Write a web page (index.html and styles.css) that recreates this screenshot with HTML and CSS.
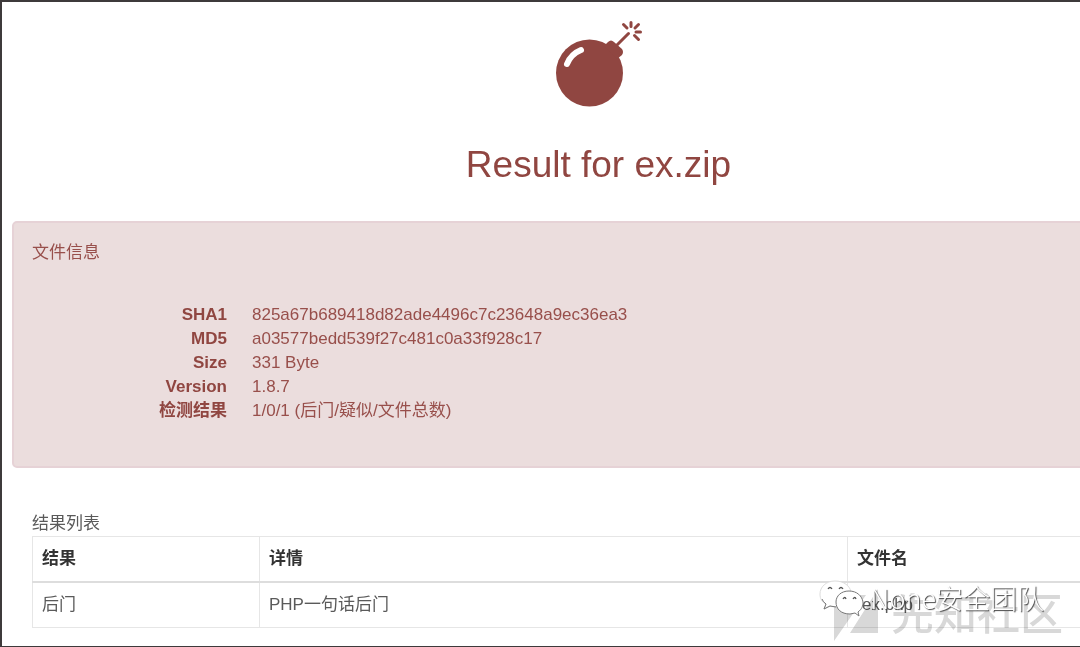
FILE: index.html
```html
<!DOCTYPE html>
<html lang="zh-CN">
<head>
<meta charset="utf-8">
<title>Result for ex.zip</title>
<link rel="stylesheet" href="styles.css">
</head>
<body>
<main class="page">
  <div class="content">
    <header class="hero">
      <svg class="bomb" viewBox="0 0 96 96" aria-hidden="true">
        <circle cx="38.500" cy="57" r="33.500" fill="currentColor"/>
        <path d="M53 30 L57 26 Q60 23 63 26 L71 33 Q73 36 71 39 L66 43 Z" fill="currentColor"/>
        <path d="M66 29 L77.500 17.500" fill="none" stroke="currentColor" stroke-width="3" stroke-linecap="round"/>
        <path d="M76 12 L72.500 8.500 M80 10.500 V6.500 M84 12 L87.500 8.500 M85 16 H89.500 M83.500 19.500 L87.500 23.500" fill="none" stroke="currentColor" stroke-width="3" stroke-linecap="round"/>
        <path d="M16 48 Q20 38 30 34" fill="none" stroke="#fff" stroke-width="6" stroke-linecap="round"/>
      </svg>
      <h1 class="title">Result for ex.zip</h1>
    </header>
    <section class="alert">
      <h2 class="label">文件信息</h2>
      <dl class="info">
        <dt>SHA1</dt><dd>825a67b689418d82ade4496c7c23648a9ec36ea3</dd>
        <dt>MD5</dt><dd>a03577bedd539f27c481c0a33f928c17</dd>
        <dt>Size</dt><dd>331 Byte</dd>
        <dt>Version</dt><dd>1.8.7</dd>
        <dt>检测结果</dt><dd>1/0/1 (后门/疑似/文件总数)</dd>
      </dl>
    </section>
    <section class="results">
      <h2 class="label">结果列表</h2>
      <table class="table">
        <colgroup><col class="col-result"><col class="col-detail"><col></colgroup>
        <thead><tr><th>结果</th><th>详情</th><th>文件名</th></tr></thead>
        <tbody><tr><td>后门</td><td>PHP一句话后门</td><td class="file">ex.php</td></tr></tbody>
      </table>
    </section>
  </div>
  <div class="community">
    <svg class="community-logo" viewBox="0 0 46 54" aria-hidden="true">
      <path d="M1 7 H33 L1 53 Z M45 1 V45 H17 Z" fill="currentColor"/>
      <path d="M44 -2 L12 43" stroke="#fff" stroke-width="3"/>
    </svg>
    <span>先知社区</span>
  </div>
  <div class="account">
    <svg class="wechat" viewBox="0 0 46 38" aria-hidden="true">
      <path d="M16 2 C7 2 1 8 1 15 C1 20 3 23 7 25 L5 30 L11 27 C13 28 17 28 20 27 C30 26 33 20 32 13 C31 7 25 2 16 2 Z" fill="#fff" stroke="#ddd"/>
      <path d="M3 20 Q4 23 7 25 L5 30 L11 27 L17 28" fill="none" stroke="#777"/>
      <path d="M30 12 C22 12 17 17 17 23 C17 30 22 35 31 35 L36 34 L40 37 L39 33 C43 30 44 27 44 23 C43 17 38 12 30 12 Z" fill="#fff" stroke="#777"/>
      <path d="M9 10 q2-3 4 0 M20 10 q2-3 4 0 M24 20 q2-3 3 0 M34 20 q2-3 3 0" fill="none" stroke="#555" stroke-width="1.3"/>
    </svg>
    <span>None安全团队</span>
  </div>
</main>
</body>
</html>
```
FILE: styles.css
```css
* { box-sizing: border-box; }

body {
  margin: 0;
  background: #fff;
  color: #5a5a5a;
  font-family: "Liberation Sans", "Noto Sans CJK SC", sans-serif;
  font-size: 17px;
  line-height: 24px;
}

h1, h2, dl, dd { margin: 0; }

.page {
  position: relative;
  min-height: 100vh;
  overflow: hidden;
  padding: 14px 0 16px 10px;
  border: solid #3e3a3b;
  border-width: 2px 0 1px 2px;
}

/* The report is wider than the window and runs past its right edge. */
.content { margin-right: -105px; }

.hero {
  display: flex;
  flex-direction: column;
  align-items: center;
  gap: 31px;
  color: #904641;
}

.bomb {
  display: block;
  width: 96px;
  height: 96px;
}

.title {
  font-size: 37px;
  line-height: 44px;
  font-weight: 400;
}

.label {
  font-size: 17px;
  line-height: 24px;
  font-weight: 400;
}

.alert {
  margin-top: 34px;
  padding: 18px 18px 43px;
  border: 2px solid #e6d2d6;
  border-radius: 5px;
  background: #ebdddd;
  color: #984f4b;
}

.info {
  display: grid;
  grid-template-columns: 195px 1fr;
  column-gap: 25px;
  margin-top: 38px;
}

.info dt {
  color: #904641;
  font-weight: 700;
  text-align: right;
}

.results { padding: 44px 20px 0; }

.table {
  width: 100%;
  border-collapse: collapse;
  table-layout: fixed;
}

.col-result { width: 227px; }
.col-detail { width: 588px; }

.table th,
.table td {
  padding: 10px 9px;
  border: 1px solid #e6e6e6;
  text-align: left;
}

.table th {
  border-bottom: 2px solid #ddd;
  color: #333;
}

.table .file { padding-left: 14px; }

/* Watermarks over the lower right corner of the report. */
.community,
.account {
  position: absolute;
  display: flex;
  align-items: center;
  pointer-events: none;
}

.community {
  right: 17px;
  bottom: 4px;
  gap: 12px;
  color: #d8d8d8;
  mix-blend-mode: multiply;
  font-size: 43px;
  line-height: 54px;
  font-weight: 500;
}

.community-logo {
  width: 46px;
  height: 54px;
}

.account {
  right: 36px;
  bottom: 28px;
  gap: 5px;
  color: #fff;
  font-size: 27px;
  line-height: 40px;
  font-family: "Noto Sans CJK SC", sans-serif;
  font-weight: 300;
  text-shadow: 1px 1px 1px #444;
}

.wechat {
  width: 46px;
  height: 38px;
}
```
